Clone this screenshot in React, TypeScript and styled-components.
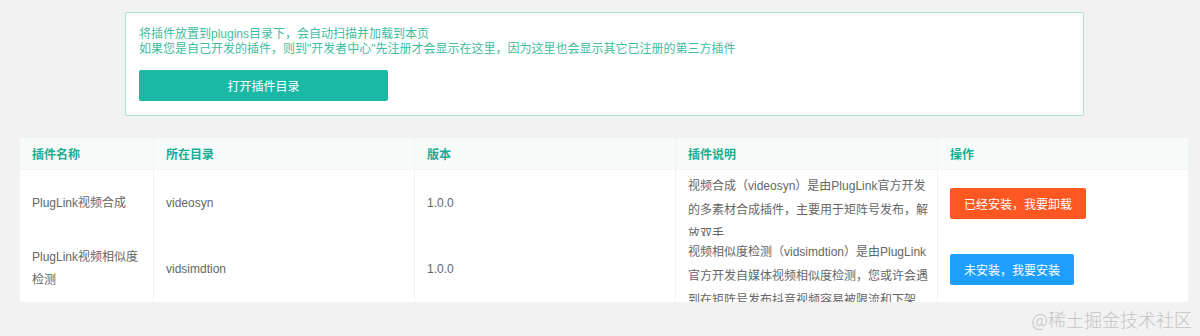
import React from "react";
import styled, { createGlobalStyle } from "styled-components";

const GlobalStyle = createGlobalStyle`
  html, body {
    margin: 0;
    padding: 0;
    background: #f2f2f2;
    font-family: "Liberation Sans", "Noto Sans CJK SC", sans-serif;
  }
  * { box-sizing: border-box; }
`;

const Page = styled.div`
  position: relative;
  min-height: 336px;
  padding-top: 12px;
  overflow: hidden;
`;

const Notice = styled.div`
  margin-left: 125px;
  width: 959px;
  height: 104px;
  background: #fff;
  border: 1px solid #a9e0cf;
  border-radius: 2px;
  padding: 14px 13px 0;
`;

const NoticeText = styled.p`
  margin: 0;
  font-size: 12px;
  line-height: 15px;
  color: #3dbd9f;
`;

const PrimaryButton = styled.button`
  display: block;
  margin-top: 13px;
  width: 249px;
  height: 31px;
  border: none;
  border-radius: 2px;
  background: #19b9a6;
  color: #fff;
  font-family: inherit;
  font-size: 12px;
  cursor: pointer;
`;

const Table = styled.div`
  margin: 22px 12px 0 20px;
  background: #fff;
  display: grid;
  grid-template-columns: 133px 261px 261px 262px 1fr;
`;

const HeadCell = styled.div<{ $first?: boolean }>`
  height: 32px;
  display: flex;
  align-items: center;
  padding: 0 12px;
  background: #f6fbf9;
  border-left: ${(p) => (p.$first ? "none" : "1px solid #eef2f0")};
  border-bottom: 1px solid #f1f4f3;
  color: #19ad92;
  font-weight: bold;
  font-size: 12px;
`;

const Cell = styled.div<{ $first?: boolean }>`
  height: 66px;
  display: flex;
  align-items: center;
  padding: 0 12px;
  border-left: ${(p) => (p.$first ? "none" : "1px solid #f2f2f2")};
  color: #666;
  font-size: 12px;
  line-height: 23px;
`;

const DescCell = styled.div`
  height: 66px;
  overflow: hidden;
  padding: 4px 6px 0 12px;
  border-left: 1px solid #f2f2f2;
  color: #666;
  font-size: 12px;
  line-height: 24px;
`;

const ActionButton = styled.button<{ $variant: "danger" | "normal" }>`
  height: 31px;
  padding: 0 14px;
  border: none;
  border-radius: 2px;
  background: ${(p) => (p.$variant === "danger" ? "#ff5722" : "#1e9fff")};
  color: #fff;
  font-family: inherit;
  font-size: 12px;
  cursor: pointer;
  white-space: nowrap;
`;

const Watermark = styled.div`
  position: absolute;
  right: 8px;
  bottom: 5px;
  font-size: 18px;
  line-height: 24px;
  color: #c4c4c4;
  font-family: "Noto Sans CJK SC", sans-serif;
  font-weight: 300;
`;

type Plugin = {
  name: string;
  dir: string;
  version: string;
  desc: string;
  installed: boolean;
};

const plugins: Plugin[] = [
  {
    name: "PlugLink视频合成",
    dir: "videosyn",
    version: "1.0.0",
    desc: "视频合成（videosyn）是由PlugLink官方开发的多素材合成插件，主要用于矩阵号发布，解放双手",
    installed: true,
  },
  {
    name: "PlugLink视频相似度检测",
    dir: "vidsimdtion",
    version: "1.0.0",
    desc: "视频相似度检测（vidsimdtion）是由PlugLink官方开发自媒体视频相似度检测，您或许会遇到在矩阵号发布抖音视频容易被限流和下架",
    installed: false,
  },
];

const headers = ["插件名称", "所在目录", "版本", "插件说明", "操作"];

export default function App() {
  return (
    <Page>
      <GlobalStyle />
      <Notice>
        <NoticeText>将插件放置到plugins目录下，会自动扫描并加载到本页</NoticeText>
        <NoticeText>
          如果您是自己开发的插件，则到"开发者中心"先注册才会显示在这里，因为这里也会显示其它已注册的第三方插件
        </NoticeText>
        <PrimaryButton>打开插件目录</PrimaryButton>
      </Notice>
      <Table>
        {headers.map((h, i) => (
          <HeadCell key={h} $first={i === 0}>
            {h}
          </HeadCell>
        ))}
        {plugins.map((p) => (
          <React.Fragment key={p.dir}>
            <Cell $first>{p.name}</Cell>
            <Cell>{p.dir}</Cell>
            <Cell>{p.version}</Cell>
            <DescCell>{p.desc}</DescCell>
            <Cell>
              {p.installed ? (
                <ActionButton $variant="danger">已经安装，我要卸载</ActionButton>
              ) : (
                <ActionButton $variant="normal">未安装，我要安装</ActionButton>
              )}
            </Cell>
          </React.Fragment>
        ))}
      </Table>
      <Watermark>@稀土掘金技术社区</Watermark>
    </Page>
  );
}
